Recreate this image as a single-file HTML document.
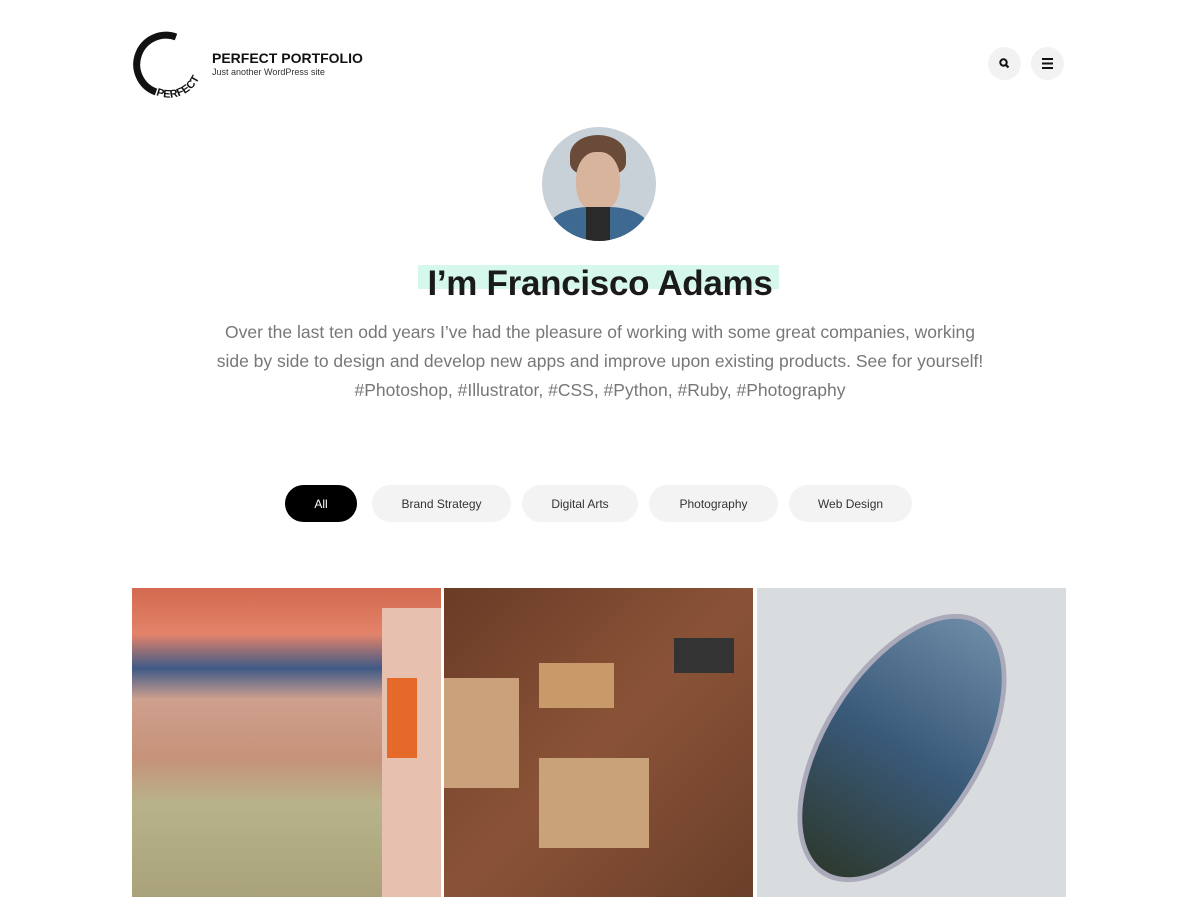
<!DOCTYPE html>
<html><head><meta charset="utf-8"><style>
body{margin:0;width:1200px;height:900px;overflow:hidden;background:#fff;font-family:"Liberation Sans",sans-serif;position:relative}
.a{position:absolute}
.btn{position:absolute;top:485px;height:37px;border-radius:19px;background:#f3f3f3;font-size:12px;color:#333;display:flex;align-items:center;justify-content:center}
.ic{position:absolute;top:47px;width:33px;height:33px;border-radius:50%;background:#f2f2f2}
p{margin:0}
</style></head><body>
<svg class="a" style="left:126px;top:30px" width="76" height="70" viewBox="0 0 76 70">
<path d="M50 7 A28 28 0 1 0 30 62" fill="none" stroke="#111" stroke-width="7"/>
<defs><path id="arc" d="M30 65 A30 30 0 0 0 56 4"/></defs>
<text font-size="11" font-weight="bold" fill="#111" font-family="Liberation Sans"><textPath href="#arc">PERFECT</textPath></text>
</svg>
<div class="a" style="left:212px;top:50px;font-size:14px;font-weight:bold;color:#111">PERFECT PORTFOLIO</div>
<div class="a" style="left:212px;top:67px;font-size:9px;color:#333">Just another WordPress site</div>
<div class="ic" style="left:988px"><svg width="33" height="33"><circle cx="15.5" cy="15.5" r="3.2" fill="none" stroke="#111" stroke-width="2"/><line x1="18" y1="18" x2="20.5" y2="20.5" stroke="#111" stroke-width="2.2"/></svg></div>
<div class="ic" style="left:1031px"><svg width="33" height="33"><path d="M11 12h11M11 16.5h11M11 21h11" stroke="#111" stroke-width="2"/></svg></div>
<div class="a" style="left:542px;top:127px;width:114px;height:114px;border-radius:50%;overflow:hidden;background:#c9d1d8">
<div class="a" style="left:28px;top:8px;width:56px;height:40px;border-radius:50% 50% 30% 30%;background:#6a4a38"></div>
<div class="a" style="left:34px;top:25px;width:44px;height:60px;border-radius:45%;background:#d8b49c"></div>
<div class="a" style="left:5px;top:80px;width:104px;height:60px;border-radius:40% 40% 0 0;background:#3e6990"></div>
<div class="a" style="left:44px;top:80px;width:24px;height:40px;background:#2a2a2a"></div></div>
<div class="a" style="left:418px;top:265px;width:361px;height:24px;background:#d6f8ec"></div>
<div class="a" style="left:0;width:1200px;top:264px;text-align:center;font-size:35px;font-weight:bold;color:#1a1a1a;letter-spacing:-0.3px">I’m Francisco Adams</div>
<div class="a" style="left:150px;width:900px;top:318px;text-align:center;font-size:17.5px;line-height:29px;color:#777">
<p>Over the last ten odd years I’ve had the pleasure of working with some great companies, working</p>
<p>side by side to design and develop new apps and improve upon existing products. See for yourself!</p>
<p>#Photoshop, #Illustrator, #CSS, #Python, #Ruby, #Photography</p></div>
<div class="btn" style="left:285px;width:72px;background:#000;color:#fff">All</div>
<div class="btn" style="left:372px;width:139px">Brand Strategy</div>
<div class="btn" style="left:522px;width:116px">Digital Arts</div>
<div class="btn" style="left:649px;width:129px">Photography</div>
<div class="btn" style="left:789px;width:123px">Web Design</div>
<div class="a" style="left:132px;top:588px;width:309px;height:309px;overflow:hidden;background:linear-gradient(180deg,#d26a4f 0,#e3836a 15%,#3f5a86 26%,#cfa08e 36%,#c69279 55%,#b8b38a 70%,#a9a27a 100%)"><div class="a" style="left:250px;top:20px;width:80px;height:300px;background:#e8c0b0"></div><div class="a" style="left:255px;top:90px;width:30px;height:80px;background:#e56a2a"></div></div>
<div class="a" style="left:444px;top:588px;width:309px;height:309px;overflow:hidden;background:linear-gradient(135deg,#6a3b26,#8a5337 50%,#6b3f2a)"><div class="a" style="left:95px;top:75px;width:75px;height:45px;background:#c89a6a"></div><div class="a" style="left:95px;top:170px;width:110px;height:90px;background:#c9a27a"></div><div class="a" style="left:0;top:90px;width:75px;height:110px;background:#caa17a"></div><div class="a" style="left:230px;top:50px;width:60px;height:35px;background:#333"></div></div>
<div class="a" style="left:757px;top:588px;width:309px;height:309px;overflow:hidden;background:#d8dcde"><div class="a" style="left:-5px;top:80px;width:290px;height:150px;border-radius:50%;transform:rotate(-58deg);background:linear-gradient(90deg,#2d3a30,#3a5a7a 50%,#6c8aa5);border:5px solid #aab"></div></div>
</body></html>
